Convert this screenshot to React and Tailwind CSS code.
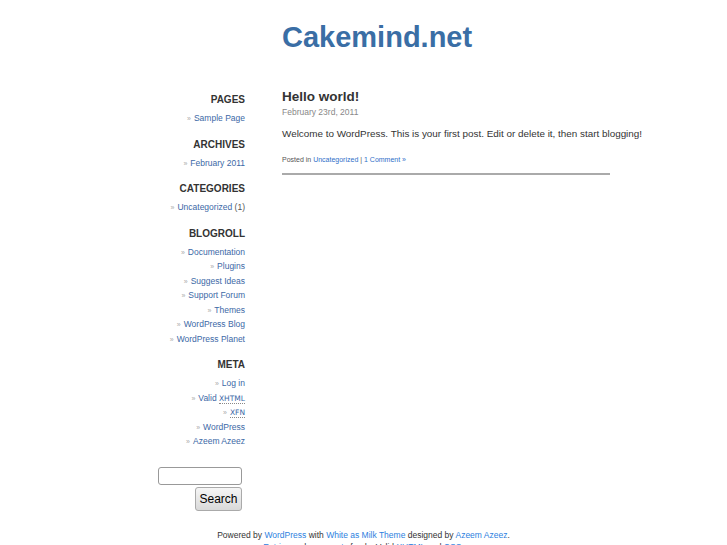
import React from 'react';

const pages = ['Sample Page'];
const archives = ['February 2011'];
const blogroll = [
    'Documentation',
    'Plugins',
    'Suggest Ideas',
    'Support Forum',
    'Themes',
    'WordPress Blog',
    'WordPress Planet',
];

function Item({ children }) {
    return (
        <li className="h-[14.5px] text-[8.5px] leading-[14.5px] whitespace-nowrap">
            <span className="text-[#aaa] text-[7px] leading-none mr-[3px]">»</span>
            {children}
        </li>
    );
}

function Link({ children }) {
    return <a href="#" className="text-[#3b68a6]">{children}</a>;
}

function Abbr({ children }) {
    return (
        <abbr className="no-underline leading-none border-b border-dotted border-[#888] font-['DejaVu_Sans',sans-serif] text-[7.5px]">
            {children}
        </abbr>
    );
}

function Section({ title, children, last }) {
    return (
        <div className={last ? '' : 'mb-[12px]'}>
            <h2 className="text-[10px] leading-[14px] font-bold text-[#333] mb-[4px]">{title}</h2>
            <ul>{children}</ul>
        </div>
    );
}

function App() {
    return (
        <div className="h-[545px] bg-white font-['Liberation_Sans',Arial,sans-serif] text-[#333] overflow-hidden">
            <div className="flex">
                {/* Sidebar */}
                <aside className="w-[245px] shrink-0 text-right pt-[93px]">
                    <Section title="PAGES">
                        {pages.map(p => <Item key={p}><Link>{p}</Link></Item>)}
                    </Section>
                    <Section title="ARCHIVES">
                        {archives.map(p => <Item key={p}><Link>{p}</Link></Item>)}
                    </Section>
                    <Section title="CATEGORIES">
                        <Item><Link>Uncategorized</Link> <span className="text-[#555]">(1)</span></Item>
                    </Section>
                    <Section title="BLOGROLL">
                        {blogroll.map(p => <Item key={p}><Link>{p}</Link></Item>)}
                    </Section>
                    <Section title="META" last>
                        <Item><Link>Log in</Link></Item>
                        <Item><Link>Valid <Abbr>XHTML</Abbr></Link></Item>
                        <Item><Link><Abbr>XFN</Abbr></Link></Item>
                        <Item><Link>WordPress</Link></Item>
                        <Item><Link>Azeem Azeez</Link></Item>
                    </Section>

                    {/* Search */}
                    <form className="mt-[18px] mr-[3px] flex flex-col items-end">
                        <input
                            type="text"
                            className="w-[84px] h-[18px] border border-[#999] rounded-[3px] bg-white outline-none"
                        />
                        <button
                            type="button"
                            className="mt-[2px] w-[47px] h-[24px] border border-[#aaa] rounded-[3px] bg-gradient-to-b from-[#f6f6f6] to-[#d9d9d9] text-[12px] leading-none text-black"
                        >
                            Search
                        </button>
                    </form>
                </aside>

                {/* Main */}
                <main className="ml-[37px] w-[400px]">
                    <h1 className="pt-[23px] text-[29px] leading-[29px] font-bold text-[#3a6ea5]">Cakemind.net</h1>

                    <div className="mt-[37px]">
                        <h2 className="text-[13.5px] leading-[16px] font-bold text-[#333]">Hello world!</h2>
                        <p className="mt-[1px] text-[8.5px] leading-[12px] text-[#888]">February 23rd, 2011</p>
                        <p className="mt-[9px] text-[9.9px] leading-[14px] text-[#333]">
                            Welcome to WordPress. This is your first post. Edit or delete it, then start blogging!
                        </p>
                        <p className="mt-[14px] text-[7px] leading-[10px] text-[#555]">
                            Posted in <a href="#" className="text-[#2f6fc9]">Uncategorized</a> | <a href="#" className="text-[#2f6fc9]">1 Comment »</a>
                        </p>
                        <div className="mt-[8px] w-[328px] h-[2px] bg-[#aaa]"></div>
                    </div>
                </main>
            </div>

            {/* Footer */}
            <footer className="mt-[18px] text-center text-[8.5px] leading-[12px] text-[#333]">
                <p>
                    Powered by <a href="#" className="text-[#2d7fe0]">WordPress</a> with <a href="#" className="text-[#2d7fe0]">White as Milk Theme</a> designed by <a href="#" className="text-[#2d7fe0]">Azeem Azeez</a>.
                </p>
                <p>
                    <a href="#" className="text-[#2d7fe0]">Entries</a> and <a href="#" className="text-[#2d7fe0]">comments</a> feeds. Valid <a href="#" className="text-[#2d7fe0]">XHTML</a> and <a href="#" className="text-[#2d7fe0]">CSS</a>.
                </p>
            </footer>
        </div>
    );
}

export default App;
